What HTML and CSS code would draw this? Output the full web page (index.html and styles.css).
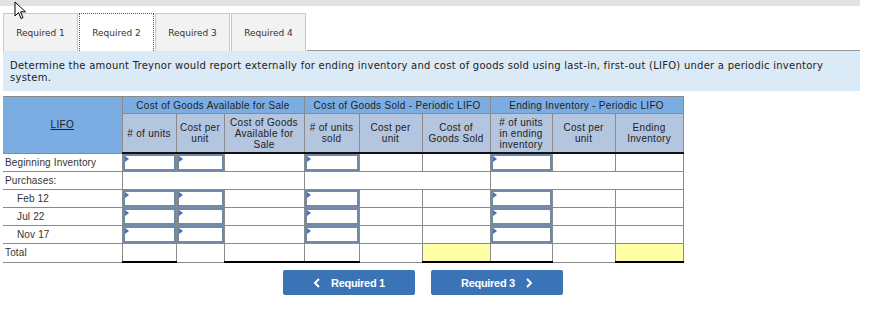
FILE: index.html
```html
<!DOCTYPE html>
<html>
<head>
  <meta charset="UTF-8">
  <title>Required 2 - LIFO</title>
  <link rel="stylesheet" href="styles.css">
</head>
<body>
  <div class="topbar"></div>

  <!-- Part tabs -->
  <div class="tabs">
    <div class="tab">Required 1</div>
    <div class="tab active">Required 2</div>
    <div class="tab">Required 3</div>
    <div class="tab">Required 4</div>
    <div class="tab-fill"></div>
  </div>

  <div class="prompt">
    Determine the amount Treynor would report externally for ending inventory and cost of goods sold using last-in, first-out (LIFO) under a periodic inventory system.
  </div>

  <table class="grid">
    <colgroup>
      <col style="width:119px">
      <col style="width:54px">
      <col style="width:48px">
      <col style="width:80px">
      <col style="width:55px">
      <col style="width:63px">
      <col style="width:68px">
      <col style="width:62px">
      <col style="width:63px">
      <col style="width:68px">
    </colgroup>
    <thead>
      <tr class="group-row">
        <th rowspan="2" class="lifo"><u>LIFO</u></th>
        <th colspan="3">Cost of Goods Available for Sale</th>
        <th colspan="3">Cost of Goods Sold - Periodic LIFO</th>
        <th colspan="3">Ending Inventory - Periodic LIFO</th>
      </tr>
      <tr class="sub-row">
        <th># of units</th>
        <th>Cost per<br>unit</th>
        <th>Cost of Goods<br>Available for<br>Sale</th>
        <th># of units<br>sold</th>
        <th>Cost per<br>unit</th>
        <th>Cost of<br>Goods Sold</th>
        <th># of units<br>in ending<br>inventory</th>
        <th>Cost per<br>unit</th>
        <th>Ending<br>Inventory</th>
      </tr>
    </thead>
    <tbody>
      <tr>
        <td class="label">Beginning Inventory</td>
        <td class="in"><div class="box"></div></td>
        <td class="in"><div class="box"></div></td>
        <td></td>
        <td class="in sep"><div class="box"></div></td>
        <td></td>
        <td></td>
        <td class="in sep"><div class="box"></div></td>
        <td></td>
        <td></td>
      </tr>
      <tr>
        <td class="label">Purchases:</td>
        <td colspan="3"></td>
        <td colspan="3" class="sep"></td>
        <td colspan="3" class="sep"></td>
      </tr>
      <tr>
        <td class="label indent">Feb 12</td>
        <td class="in"><div class="box"></div></td>
        <td class="in"><div class="box"></div></td>
        <td></td>
        <td class="in sep"><div class="box"></div></td>
        <td></td>
        <td></td>
        <td class="in sep"><div class="box"></div></td>
        <td></td>
        <td></td>
      </tr>
      <tr>
        <td class="label indent">Jul 22</td>
        <td class="in"><div class="box"></div></td>
        <td class="in"><div class="box"></div></td>
        <td></td>
        <td class="in sep"><div class="box"></div></td>
        <td></td>
        <td></td>
        <td class="in sep"><div class="box"></div></td>
        <td></td>
        <td></td>
      </tr>
      <tr>
        <td class="label indent">Nov 17</td>
        <td class="in"><div class="box"></div></td>
        <td class="in"><div class="box"></div></td>
        <td></td>
        <td class="in sep"><div class="box"></div></td>
        <td></td>
        <td></td>
        <td class="in sep"><div class="box"></div></td>
        <td></td>
        <td></td>
      </tr>
      <tr class="total">
        <td class="label">Total</td>
        <td class="tot"></td>
        <td></td>
        <td class="tot"></td>
        <td class="tot sep"></td>
        <td></td>
        <td class="tot hl"></td>
        <td class="tot sep"></td>
        <td></td>
        <td class="tot hl"></td>
      </tr>
    </tbody>
  </table>

  <div class="nav">
    <button class="nav-btn">
      <svg width="8" height="10" viewBox="0 0 8 10"><path d="M6 1 L2 5 L6 9" fill="none" stroke="#fff" stroke-width="2"/></svg>
      Required 1
    </button>
    <button class="nav-btn">
      Required 3
      <svg width="8" height="10" viewBox="0 0 8 10"><path d="M2 1 L6 5 L2 9" fill="none" stroke="#fff" stroke-width="2"/></svg>
    </button>
  </div>

  <!-- mouse pointer -->
  <svg class="pointer" width="14" height="20" viewBox="0 0 14 20">
    <path d="M1 1 L1 15 L4.5 11.5 L7 17.5 L9 16.6 L6.6 10.8 L11.5 10.8 Z" fill="#fff" stroke="#000" stroke-width="1"/>
  </svg>
</body>
</html>
```

FILE: styles.css
```css
body {
  margin: 0;
  padding: 0 27px 0 3px;
  font-family: "DejaVu Sans", Verdana, sans-serif;
  color: #222;
  background: #fff;
  position: relative;
  width: 857px;
}

.topbar {
  height: 6px;
  background: #e2e2e2;
  margin: 0 0 7px -3px;
}

.tabs {
  display: flex;
  gap: 1px;
}

.tab {
  width: 73px;
  height: 37px;
  display: flex;
  align-items: center;
  justify-content: center;
  background: #f2f2f2;
  border: 1px solid #c8c8c8;
  border-bottom: none;
  font-size: 9px;
  color: #333;
}

.tab.active {
  background: #fff;
  border: 1px dotted #555;
  border-bottom: none;
}

.tab-fill {
  flex: 1;
  border-bottom: 1px solid #9a9a9a;
}

.prompt {
  background: #dbeaf7;
  padding: 9px 7px 7px;
  font-size: 10px;
  line-height: 12px;
  letter-spacing: 0.25px;
  color: #222;
  margin-bottom: 5px;
}

.grid {
  border-collapse: collapse;
  table-layout: fixed;
  width: 680px;
  font-family: "Liberation Sans", Arial, sans-serif;
  font-size: 10px;
}

.grid th {
  font-weight: normal;
  color: #222;
  border: 1px solid #8a8a8a;
  padding: 0;
  line-height: 11px;
  letter-spacing: 0.3px;
}

.group-row th {
  background: #7badE3;
  height: 16px;
}

.grid th.lifo {
  background: #7badE3;
  border-left: none;
  border-bottom: 1px solid #8a8a8a;
}

.sub-row th {
  background: #b3c5df;
  height: 38px;
  border-bottom: 2px solid #111;
}

.grid td {
  border: 1px solid #8a8a8a;
  height: 17px;
  padding: 0;
}

.grid td.label {
  border-left: none;
  font-size: 10px;
  letter-spacing: 0.15px;
  color: #333;
  padding-left: 2px;
}

.grid td.indent {
  padding-left: 14px;
}

.grid td.sep {
  border-left: 1px solid #222;
}

.grid td.in {
  padding: 0;
}

.box {
  position: relative;
  height: 17px;
  box-sizing: border-box;
  border: 2px solid #7189a8;
  background: #fff;
}

.box::before {
  content: "";
  position: absolute;
  left: 0;
  top: 0;
  border-top: 3px solid transparent;
  border-bottom: 3px solid transparent;
  border-left: 4px solid #3f74c0;
}

.grid tr.total td.tot {
  border-top: 1px solid #000;
  border-bottom: 2px solid #000;
}

.grid td.hl {
  background: #ffffa8;
}

.nav {
  display: flex;
  gap: 16px;
  margin: 7px 0 0 280px;
}

.nav-btn {
  width: 132px;
  height: 25px;
  display: flex;
  align-items: center;
  justify-content: center;
  gap: 10px;
  background: #3a74b6;
  border: none;
  border-radius: 2px;
  color: #fff;
  font-family: "Liberation Sans", Arial, sans-serif;
  font-weight: bold;
  font-size: 11px;
  letter-spacing: -0.3px;
  cursor: pointer;
}

.pointer {
  position: absolute;
  left: 14px;
  top: 1px;
}
```
